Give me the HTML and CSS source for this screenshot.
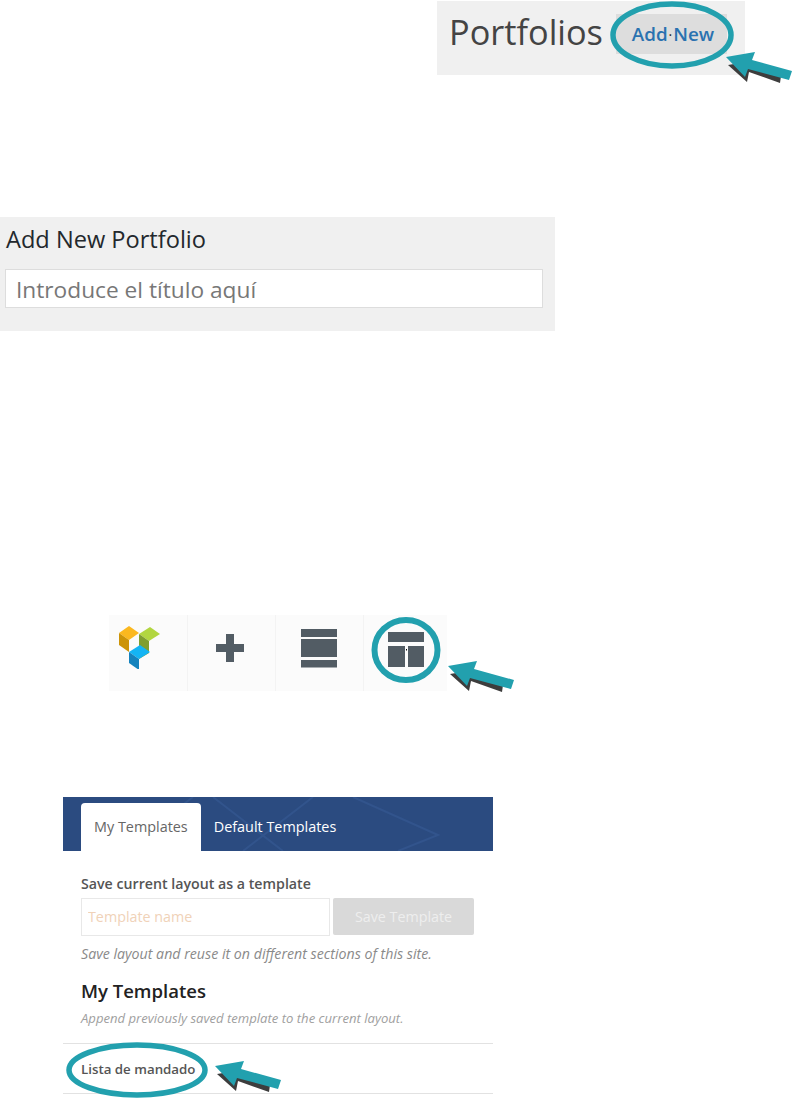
FILE: index.html
```html
<!DOCTYPE html>
<html lang="es">
<head>
<meta charset="utf-8">
<title>Portfolios</title>
<link rel="stylesheet" href="styles.css">
</head>
<body>
<svg class="defs" width="0" height="0" aria-hidden="true">
  <defs>
    <symbol id="arrow" viewBox="0 0 66 32">
      <polygon fill="#3d3d3d" points="2,13 21,30 23,20 54,31 55,24 20,10"/>
      <polygon fill="#22a0ae" points="0,5 29,0 26,8 66,19 63,28 22,17 19,25"/>
    </symbol>
  </defs>
</svg>
<main class="page">
  <section class="list-head">
    <h1 class="list-title">Portfolios</h1>
    <a class="add-btn">Add<span class="dot">·</span>New</a>
  </section>
  <svg class="ring ring-add" viewBox="0 0 124 68"><ellipse cx="62" cy="34" rx="59" ry="31"/></svg>
  <svg class="arrow arrow-add"><use href="#arrow"/></svg>

  <section class="new-panel">
    <h2 class="new-title">Add New Portfolio</h2>
    <input class="title-input" placeholder="Introduce el título aquí">
  </section>

  <nav class="toolbar">
    <div class="tool tool-logo">
      <svg width="44" height="46" viewBox="0 0 44 46">
        <polygon fill="#fbb81f" points="1,10 11,3 21,10 11,17"/>
        <polygon fill="#cc9408" points="1,10 11,17 11,29 1,22"/>
        <polygon fill="#b2d640" points="21,11 32,4 42,11 31,18"/>
        <polygon fill="#7f9e2f" points="21,11 31,18 31,30 21,36"/>
        <polygon fill="#14b4f4" points="11,29 22,22 32,29 21,36"/>
        <polygon fill="#1583bd" points="11,29 21,36 21,47 11,40"/>
      </svg>
    </div>
    <div class="tool tool-plus">
      <svg width="30" height="30" viewBox="0 0 30 30"><path class="glyph" d="M11 1h8v10h10v8H19v10h-8V19H1v-8h10z"/></svg>
    </div>
    <div class="tool tool-rows">
      <svg width="38" height="40" viewBox="0 0 38 40"><path class="glyph" d="M1 1h36v8H1zM1 11h36v18H1zM1 32h36v7.500H1z"/></svg>
    </div>
    <div class="tool tool-layout">
      <svg width="38" height="38" viewBox="0 0 38 38"><path class="glyph" d="M1 1h36v10H1zM1 15h17v21H1zM21 15h16v21H21z"/><path d="M19 18h1v1.600h-1z"/></svg>
    </div>
  </nav>
  <svg class="ring ring-tool" viewBox="0 0 70 66"><ellipse cx="35" cy="33" rx="31.500" ry="30"/></svg>
  <svg class="arrow arrow-tool"><use href="#arrow"/></svg>

  <section class="modal">
    <header class="modal-head">
      <svg class="pattern" viewBox="0 0 430 54" aria-hidden="true">
        <path d="M130 0l-70 54M150 0l70 54M250 0l-70 54M290 0l85 38-40 16"/>
      </svg>
      <a class="tab tab-active">My Templates</a>
      <a class="tab">Default Templates</a>
    </header>
    <div class="modal-body">
      <label class="save-label">Save current layout as a template</label>
      <div class="save-row">
        <input class="name-input" placeholder="Template name">
        <button class="save-btn">Save Template</button>
      </div>
      <p class="help">Save layout and reuse it on different sections of this site.</p>
      <h3 class="my-title">My Templates</h3>
      <p class="help help-small">Append previously saved template to the current layout.</p>
    </div>
    <div class="template-row">Lista de mandado</div>
  </section>
  <svg class="ring ring-row" viewBox="0 0 142 56"><ellipse cx="71" cy="28" rx="68" ry="25"/></svg>
  <svg class="arrow arrow-row"><use href="#arrow"/></svg>
</main>
</body>
</html>
```
FILE: styles.css
```css
* { box-sizing: border-box; }
html, body { margin: 0; padding: 0; background: #fff; }
body { font-family: "Open Sans", "Noto Sans", sans-serif; overflow: hidden; }
.defs { position: absolute; }
.page { position: relative; width: 792px; height: 1098px; padding-top: 1px; }

/* annotations layered over the screenshots */
.ring { position: absolute; fill: none; stroke: #22a0ae; stroke-width: 5.5; }
.ring-add { left: 610px; top: 1px; width: 124px; height: 68px; }
.ring-tool { left: 371px; top: 617px; width: 70px; height: 66px; stroke-width: 6; }
.ring-row { left: 66px; top: 1042px; width: 142px; height: 56px; }
.arrow { position: absolute; width: 66px; height: 32px; }
.arrow-add { left: 726px; top: 52px; }
.arrow-tool { left: 448px; top: 661px; }
.arrow-row { left: 215px; top: 1061px; }

.list-head {
  margin-left: 437px; width: 308px; height: 74px;
  background: #f0f0f0; display: flex; align-items: flex-start;
  padding: 12px 0 0 12px; gap: 13px;
}
.list-title { margin: 0; font-size: 34.3px; font-weight: 400; color: #444; line-height: 38px; }
.add-btn {
  display: flex; align-items: center; justify-content: center;
  width: 111px; height: 40px; margin-top: 1px; padding-left: 3px;
  background: #ddd; color: #2a72b0; font-size: 18.8px; font-weight: 600;
}
.dot { color: #222; font-weight: 400; font-size: 14px; padding: 0 1px; }

.new-panel {
  margin-top: 142px; width: 555px; height: 114px;
  background: #f0f0f0; padding: 6px 12px 0 5px;
}
.new-title { margin: 0 0 14px 1px; font-size: 23.6px; font-weight: 400; color: #23282d; line-height: 32px; }
.title-input {
  display: block; width: 538px; height: 39px; margin: 0;
  background: #fff; border: 1px solid #ddd; padding: 1px 10px 0;
  font: 400 22.7px "Open Sans", sans-serif; outline: 0;
}
.title-input::placeholder { color: #777; opacity: 1; }

.toolbar {
  margin: 284px 0 0 109px; width: 338px; height: 76px;
  background: #fbfbfb; display: flex;
}
.tool {
  width: 88px; display: flex; align-items: center; justify-content: center;
  border-left: 1px solid #f3f3f3; padding-bottom: 10px;
}
.tool-logo { width: 78px; border-left: 0; padding: 0 16px 14px 0; }
.tool-plus { padding: 0 4px 10px 0; }
.tool-rows { padding: 0 2px 10px 0; }
.tool-layout { width: 84px; padding: 0 0 6px 0; }
.glyph { fill: #525c64; }

.modal { margin: 106px 0 0 63px; width: 430px; }
.modal-head {
  position: relative; height: 54px; background: #2b4b80; overflow: hidden;
  display: flex; align-items: flex-end; padding-left: 18px;
}
.pattern {
  position: absolute; left: 0; top: 0; width: 430px; height: 54px;
  fill: none; stroke: #32548c; stroke-width: 2;
}
.tab {
  position: relative; height: 48px; line-height: 48px; padding: 0 13px;
  font-size: 14.4px; color: #fff; font-weight: 400;
}
.tab-active { background: #fff; color: #666; border-radius: 4px 4px 0 0; }

.modal-body { padding: 24px 19px 0 18px; }
.save-label { display: block; font-size: 14.2px; font-weight: 600; color: #555; line-height: 18px; margin-bottom: 5px; }
.save-row { display: flex; gap: 3px; }
.name-input {
  width: 249px; height: 38px; border: 1px solid #e8e8e8; padding: 0 6px 2px;
  font: 400 14.3px "Open Sans", sans-serif; outline: 0; background: #fff;
}
.name-input::placeholder { color: #f0d2b8; opacity: 1; }
.save-btn {
  width: 141px; height: 37px; border: 0; border-radius: 2px;
  background: #d9d9d9; color: #eee; font: 400 14.3px "Open Sans", sans-serif; padding: 0;
}
.help { margin: 8px 0 0; font-size: 14.2px; font-style: italic; color: #8a8a8a; line-height: 20px; }
.my-title { margin: 14px 0 0; font-size: 18.5px; font-weight: 600; color: #222; line-height: 26px; }
.help-small { margin-top: 5px; font-size: 13.1px; color: #a0a0a0; line-height: 18px; }

.template-row {
  margin-top: 16px; height: 51px; padding: 0 18px; line-height: 51px;
  border-top: 1px solid #e2e2e2; border-bottom: 1px solid #e2e2e2;
  font-size: 13.3px; font-weight: 600; color: #555;
}
```
